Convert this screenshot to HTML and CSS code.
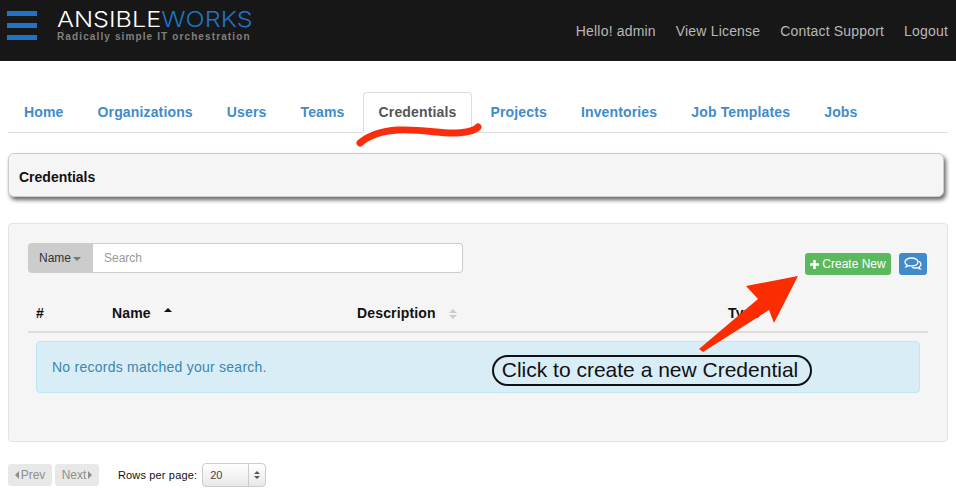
FILE: index.html
```html
<!DOCTYPE html>
<html lang="en">
<head>
    <meta charset="UTF-8">
    <meta name="viewport" content="width=device-width, initial-scale=1.0">
    <title>Credentials</title>
    <link rel="stylesheet" href="styles.css">
</head>
<body>
    <header class="topbar">
        <div class="burger"><span></span><span></span><span></span></div>
        <div class="brand">
            <div class="brand-name">ANSIBLE<span class="brand-works">WORKS</span></div>
            <div class="brand-tag">Radically simple IT orchestration</div>
        </div>
        <nav class="user-menu">
            <a href="#">Hello! admin</a>
            <a href="#">View License</a>
            <a href="#">Contact Support</a>
            <a href="#">Logout</a>
        </nav>
    </header>

    <main class="content">
        <ul class="tabs">
            <li><a href="#">Home</a></li>
            <li><a href="#">Organizations</a></li>
            <li><a href="#">Users</a></li>
            <li><a href="#">Teams</a></li>
            <li class="active"><a href="#">Credentials</a></li>
            <li><a href="#">Projects</a></li>
            <li><a href="#">Inventories</a></li>
            <li><a href="#">Job Templates</a></li>
            <li><a href="#">Jobs</a></li>
        </ul>

        <div class="breadcrumb">Credentials</div>

        <section class="well">
            <div class="toolbar">
                <div class="search">
                    <button class="search-field" type="button">Name<i class="caret"></i></button>
                    <input class="search-input" type="text" placeholder="Search">
                </div>
                <div class="actions">
                    <button class="btn btn-green" type="button">
                        <svg class="plus" width="9" height="9" viewBox="0 0 10 10"><path d="M3.600 0h2.800v3.600H10v2.800H6.400V10H3.600V6.400H0V3.600h3.600z" fill="#fff"/></svg>Create New
                    </button>
                    <button class="btn btn-blue" type="button">
                        <svg width="18" height="14" viewBox="0 0 18 14" fill="none" stroke="#fff" stroke-width="1.3">
                            <path d="M7.500 1C4 1 1 2.700 1 5c0 1.200.8 2.200 2 3-.2.7-.6 1.300-1 1.800 1.100-.2 2.200-.6 3-1.200.8.2 1.600.3 2.500.3 3.500 0 6.500-1.600 6.500-3.900S11 1 7.500 1z"/>
                            <path d="M14.800 4.300c1.300.7 2.200 1.800 2.200 3 0 1.100-.7 2-1.800 2.700.1.700.5 1.300.9 1.800-1-.2-2-.6-2.700-1.100-.7.2-1.400.3-2.200.3-1.300 0-2.500-.3-3.400-.8"/>
                        </svg>
                    </button>
                </div>
            </div>

            <table class="grid">
                <thead>
                    <tr>
                        <th class="col-num">#</th>
                        <th class="col-name">Name<i class="sort-up"></i></th>
                        <th class="col-desc">Description<span class="sort-both"><i></i><i></i></span></th>
                        <th>Type</th>
                    </tr>
                </thead>
            </table>

            <div class="alert">No records matched your search.</div>
        </section>

        <div class="pager">
            <span class="page-btn"><i class="arrow-left"></i>Prev</span>
            <span class="page-btn"><span>Next</span><i class="arrow-right"></i></span>
            <label class="rows-label">Rows per page:</label>
            <div class="rows-select">
                <span class="rows-value">20</span>
                <span class="rows-spin"><i></i><i></i></span>
            </div>
        </div>
    </main>

    <!-- annotations drawn over the screenshot -->
    <svg class="marks" width="956" height="490" viewBox="0 0 956 490">
        <path d="M360 143C368 136 381 131 398 130C420 129 438 133 452 133C464 133 473 132 478 127" fill="none" stroke="#fb2c0c" stroke-width="7" stroke-linecap="round"/>
        <path d="M699 349L758 299L746 286L798 276L774 323L769 310L703 352z" fill="#fb2c00"/>
    </svg>
    <div class="callout">Click to create a new Credential</div>
</body>
</html>
```

FILE: styles.css
```css
* {
    box-sizing: border-box;
}
body {
    font-family: "Liberation Sans", Arial, sans-serif;
    font-size: 14px;
    color: #111;
    margin: 0;
    background: #fff;
}
a {
    text-decoration: none;
}

.topbar {
    display: flex;
    align-items: flex-start;
    height: 61px;
    background: #171717;
    padding: 11px 8px 0 7px;
}
.burger {
    display: flex;
    flex-direction: column;
    gap: 7px;
    width: 30px;
}
.burger span {
    display: block;
    height: 5px;
    background: #1f74c8;
}
.brand {
    margin-left: 20px;
}
.brand-name {
    font-family: Inter, sans-serif;
    font-weight: 300;
    font-size: 22px;
    line-height: 17px;
    white-space: nowrap;
    color: #fff;
    transform: scaleX(1.145);
    transform-origin: left;
}
.brand-works {
    color: #1f74c4;
}
.brand-tag {
    margin-top: 2px;
    font-size: 10px;
    font-weight: bold;
    letter-spacing: 1.12px;
    line-height: 14px;
    color: #808080;
}
.user-menu {
    margin-left: auto;
    display: flex;
    gap: 20px;
    padding-top: 11px;
}
.user-menu a {
    color: #b8b8b8;
    line-height: 18px;
    letter-spacing: .18px;
}

.content {
    padding: 31px 8px 0;
}
.tabs {
    display: flex;
    gap: 2px;
    list-style: none;
    margin: 0;
    padding: 0;
    height: 41px;
    border-bottom: 1px solid #ddd;
}
.tabs a {
    display: block;
    height: 41px;
    padding: 10px 15px 0;
    border: 1px solid transparent;
    border-radius: 4px 4px 0 0;
    font-weight: bold;
    letter-spacing: .15px;
    line-height: 18px;
    color: #428bca;
}
.tabs .active a {
    background: #fff;
    border-color: #ddd #ddd #fff;
    color: #555;
}

.breadcrumb {
    width: 936px;
    height: 44px;
    margin-top: 20px;
    padding-left: 10px;
    background: #f5f5f5;
    border: 1px solid #ccc;
    border-radius: 6px;
    box-shadow: 2px 3px 4px #666;
    font-weight: bold;
    line-height: 46px;
}

.well {
    height: 219px;
    margin-top: 26px;
    padding: 19px 19px 0;
    background: #f5f5f5;
    border: 1px solid #e3e3e3;
    border-radius: 4px;
}
.toolbar {
    display: flex;
    justify-content: space-between;
    align-items: flex-start;
}
.search {
    display: flex;
    width: 435px;
    height: 30px;
}
.search-field {
    width: 65px;
    padding: 0 1px 0 0;
    border: 0;
    border-radius: 4px 0 0 4px;
    background: #ccc;
    color: #333;
    font: 12px "Liberation Sans", Arial, sans-serif;
}
.caret {
    display: inline-block;
    margin-left: 2px;
    vertical-align: middle;
    border-top: 4px solid #777;
    border-left: 4px solid transparent;
    border-right: 4px solid transparent;
}
.search-input {
    flex: 1;
    padding: 0 11px;
    border: 1px solid #ccc;
    border-left: 0;
    border-radius: 0 4px 4px 0;
    background: #fff;
    font: 12px "Liberation Sans", Arial, sans-serif;
}
.search-input::placeholder {
    color: #999;
}
.actions {
    display: flex;
    gap: 8px;
    margin-top: 10px;
    padding-right: 1px;
}
.btn {
    display: flex;
    align-items: center;
    justify-content: center;
    height: 22px;
    padding: 0;
    border: 0;
    border-radius: 3px;
    color: #fff;
    font: 12px "Liberation Sans", Arial, sans-serif;
}
.btn-green {
    width: 86px;
    background: #5cb85c;
}
.btn-blue {
    width: 28px;
    background: #428bca;
}
.plus {
    margin-right: 3px;
}

.grid {
    width: 900px;
    margin-top: 25px;
    border-collapse: collapse;
    table-layout: fixed;
}
.grid th {
    height: 32px;
    padding: 0 0 6px 8px;
    text-align: left;
    font-size: 14px;
    letter-spacing: .15px;
    border-bottom: 2px solid #ddd;
}
.col-num {
    width: 76px;
}
.col-name {
    width: 245px;
}
.col-desc {
    width: 371px;
}
.sort-up {
    display: inline-block;
    margin: 0 0 7px 13px;
    vertical-align: middle;
    border-bottom: 4px solid #111;
    border-left: 4px solid transparent;
    border-right: 4px solid transparent;
}
.sort-both {
    display: inline-flex;
    flex-direction: column;
    gap: 2px;
    margin-left: 13px;
    vertical-align: middle;
}
.sort-both i {
    border-bottom: 4px solid #ccc;
    border-left: 4px solid transparent;
    border-right: 4px solid transparent;
}
.sort-both i + i {
    border-bottom: 0;
    border-top: 4px solid #ccc;
}

.alert {
    width: 884px;
    height: 52px;
    margin: 8px 0 0 8px;
    padding-left: 15px;
    background: #d9edf7;
    border: 1px solid #bce8f1;
    border-radius: 4px;
    color: #3a87ad;
    letter-spacing: .25px;
    line-height: 50px;
}

.pager {
    display: flex;
    align-items: center;
    gap: 3px;
    margin-top: 21px;
    height: 24px;
}
.page-btn {
    display: flex;
    align-items: center;
    justify-content: center;
    gap: 2px;
    width: 44px;
    height: 22px;
    background: #e8e8e8;
    border-radius: 3px;
    color: #8f8f8f;
    font-size: 12px;
}
.arrow-left {
    border-right: 4px solid #8f8f8f;
    border-top: 4px solid transparent;
    border-bottom: 4px solid transparent;
}
.arrow-right {
    border-left: 4px solid #8f8f8f;
    border-top: 4px solid transparent;
    border-bottom: 4px solid transparent;
}
.rows-label {
    margin-left: 16px;
    font-size: 11px;
    letter-spacing: .15px;
}
.rows-select {
    display: flex;
    align-items: center;
    justify-content: space-between;
    width: 64px;
    height: 24px;
    margin-left: 2px;
    padding-left: 7px;
    background: linear-gradient(#fff, #e8e8e8);
    border: 1px solid #ccc;
    border-radius: 4px;
    font-size: 11px;
    color: #444;
}
.rows-spin {
    display: flex;
    flex-direction: column;
    align-items: center;
    justify-content: center;
    gap: 2px;
    width: 17px;
    height: 22px;
    border-left: 1px solid #ccc;
}
.rows-spin i {
    border-left: 3px solid transparent;
    border-right: 3px solid transparent;
    border-bottom: 3px solid #555;
}
.rows-spin i + i {
    border-bottom: 0;
    border-top: 3px solid #555;
}

.marks {
    position: absolute;
    left: 0;
    top: 0;
    pointer-events: none;
}
.callout {
    position: absolute;
    left: 492px;
    top: 355px;
    width: 320px;
    height: 31px;
    padding-right: 4px;
    border: 2px solid #111;
    border-radius: 16px;
    text-align: center;
    font-size: 21px;
    line-height: 26px;
    color: #111;
}
```
